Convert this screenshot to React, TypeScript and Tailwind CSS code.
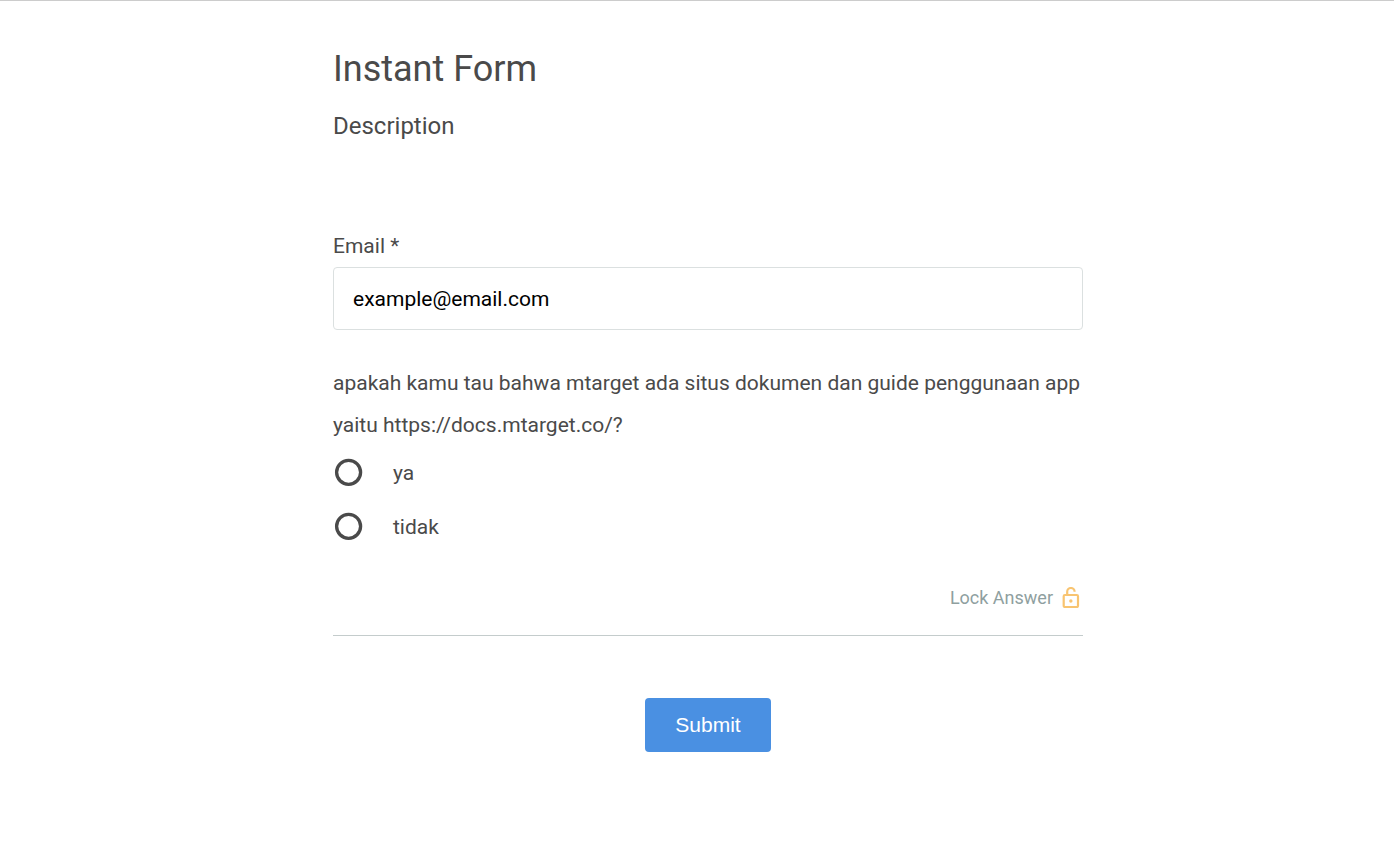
function LockIcon() {
  return (
    <svg width="18" height="21" viewBox="0 0 18 21" fill="none" stroke="#f8c471" strokeWidth="2.2">
      <rect x="1.7" y="8" width="14.3" height="12" rx="1.2" />
      <path d="M5.2 8V4.7a3.7 3.7 0 0 1 7.4 0" />
      <circle cx="8.85" cy="14" r="1.7" fill="#f8c471" stroke="none" />
    </svg>
  );
}

function RadioOption({ label }: { label: string }) {
  return (
    <label className="flex items-center h-[54px]">
      <svg className="mb-[4px]" width="30" height="30" viewBox="0 0 30 30" fill="none">
        <circle cx="15.6" cy="15.3" r="12" stroke="#4a4a4a" strokeWidth="3.3" />
      </svg>
      <span className="ml-[30px] text-[21px] text-[#4a4a4a]">{label}</span>
    </label>
  );
}

export default function App() {
  return (
    <div className="min-h-[846px] bg-white border-t border-[#cccccc] font-['Roboto',sans-serif] text-[#4a4a4a]">
      <div className="w-[750px] ml-[333px]">
        <h1 className="mt-[44px] text-[36px] leading-[48px] font-normal">Instant Form</h1>
        <p className="mt-[17px] text-[24px] leading-[32px]">Description</p>

        <div className="mt-[90px] text-[21px] leading-[28px]">Email *</div>
        <input
          className="mt-[7px] block w-full h-[63px] px-[19px] border border-[#dbe0e0] rounded-[4px] text-[21px] text-black outline-none placeholder:text-black"
          placeholder="example@email.com"
          readOnly
        />

        <p className="mt-[32px] text-[21px] leading-[42px] whitespace-nowrap">
          apakah kamu tau bahwa mtarget ada situs dokumen dan guide penggunaan app
          <br />
          yaitu https://docs.mtarget.co/?
        </p>

        <div className="mt-[1px]">
          <RadioOption label="ya" />
          <RadioOption label="tidak" />
        </div>

        <div className="mt-[30px] flex items-center justify-end pr-[3px] h-[24px]">
          <span className="text-[18px] text-[#8f9fa0]">Lock Answer</span>
          <span className="ml-[9px] flex">
            <LockIcon />
          </span>
        </div>
        <div className="mt-[26px] border-b border-[#c4cccc]" />

        <div className="mt-[62px] flex justify-center">
          <button className="w-[126px] h-[54px] bg-[#4a90e2] rounded-[4px] text-white text-[21px] font-['Liberation_Sans',sans-serif]">
            Submit
          </button>
        </div>
      </div>
    </div>
  );
}
